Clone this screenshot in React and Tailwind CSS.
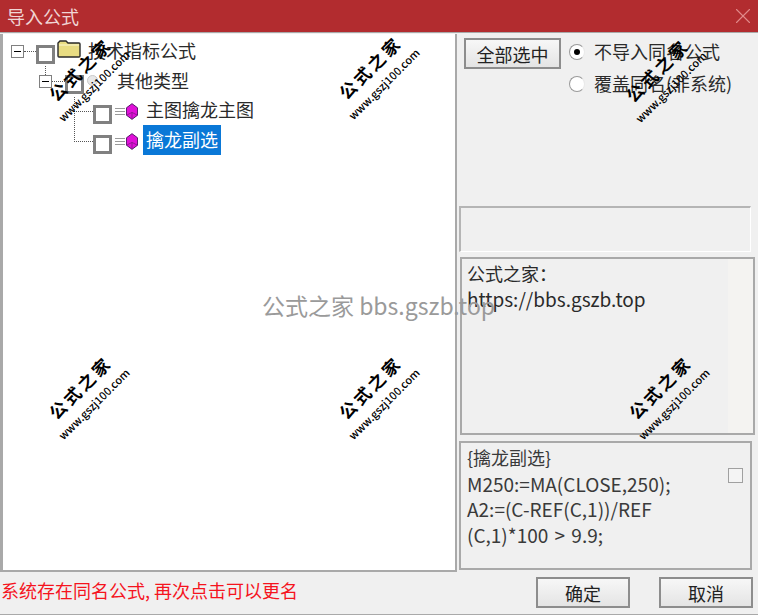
import { X } from 'lucide-react'

const FONT = "font-['Noto_Sans_CJK_SC','Noto_Sans',sans-serif]"

const WATERMARKS = [
  'left-[37px] top-[58px]',
  'left-[327px] top-[56px]',
  'left-[614px] top-[59px]',
  'left-[37px] top-[376px]',
  'left-[327px] top-[376px]',
  'left-[617px] top-[376px]',
]

export default function App() {
  return (
    <div className={`relative w-[758px] h-[615px] overflow-hidden bg-[#f0f0f0] text-[#222] ${FONT}`}>
      <header className="h-[32px] bg-[#b22c2f] flex items-center justify-between pl-[7px] pr-[2px]">
        <span className="text-[18px] leading-none text-[#f0d5d5]">导入公式</span>
        <X className="w-[26px] h-[26px] text-[#e08a8a]" strokeWidth={1} />
      </header>

      <div className="flex h-[539px] pt-[1px] border-t-[1px] border-[#a9a9a9]">
        <TreePanel />
        <div className="w-[301px] flex flex-col pl-[1px]">
          <div className="h-[172px] flex items-start pl-[6px] pt-[4px] gap-[8px]">
            <Button className="w-[97px] h-[31px]">全部选中</Button>
            <div className="flex flex-col gap-[9px] pt-[2px]">
              <Radio checked label="不导入同名公式" />
              <Radio label="覆盖同名(非系统)" />
            </div>
          </div>
          <div className="h-[46px] ml-[1px] mr-[7px] border-t-2 border-l-2 border-[#b5b5b5] border-r border-b border-r-white border-b-white" />
          <div className="h-[178px] mt-[5px] ml-[2px] mr-[3px] border-2 border-[#a9a9a9] flex">
            <div className="flex-1 pl-[5px] pt-[2px] text-[18px] leading-[25px] text-[#2a2a2a]">
              <div>公式之家：</div>
              <div className="text-[19px]">https://bbs.gszb.top</div>
            </div>
            <div className="w-[25px] bg-[#f4f3f1]" />
          </div>
          <div className="h-[129px] mt-[6px] ml-[1px] mr-[6px] border-2 border-[#a9a9a9] flex">
            <div className="flex-1 pl-[6px] pt-[2px] text-[19px] leading-[25.5px] text-[#3a3a3a]">
              <div className="text-[18px]">{'{擒龙副选}'}</div>
              <div>M250:=MA(CLOSE,250);</div>
              <div>A2:=(C-REF(C,1))/REF</div>
              <div>(C,1)*100 <span className="mx-[2px]">&gt;</span> 9.9;</div>
            </div>
            <div className="w-[22px] pt-[25px]">
              <div className="w-[15px] h-[15px] border border-[#a0a0a0] bg-[#f4f4f4]" />
            </div>
          </div>
        </div>
      </div>

      <footer className="h-[44px] border-b border-[#a9a9a9] flex items-start justify-between pr-[5px] pt-[6px]">
        <span className="pl-[1px] text-[18px] leading-[26px] text-[#f5141e]">系统存在同名公式, 再次点击可以更名</span>
        <div className="flex gap-[29px]">
          <Button className="w-[94px] h-[31px]">确定</Button>
          <Button className="w-[94px] h-[31px]">取消</Button>
        </div>
      </footer>

      <div className="absolute left-[262px] top-[290px] text-[23px] leading-[30px] text-[#9a9a9a]">公式之家 bbs.gszb.top</div>

      {WATERMARKS.map(pos => <Watermark key={pos} pos={pos} />)}
    </div>
  )
}

function TreePanel() {
  return (
    <div className="relative w-[457px] h-[538px] bg-white border-l-[3px] border-b-[2px] border-r-[2px] border-[#a9a9a9]">
      {/* dotted tree lines */}
      <div className="absolute left-[42px] top-[32px] h-[9px] border-l border-dotted border-[#555]" />
      <div className="absolute left-[71px] top-[63px] h-[45px] border-l border-dotted border-[#555]" />

      <div className="pt-[1px] text-[18px] leading-[26px] text-[#2a2a2a]">
        <div className="flex items-center h-[30px] pl-[8px]">
          <Expander />
          <Hline w="w-[12px]" />
          <Checkbox />
          <FolderIcon />
          <span className="ml-[7px]">技术指标公式</span>
        </div>
        <div className="flex items-center h-[30px] pl-[36px]">
          <Expander />
          <Hline w="w-[13px]" />
          <Checkbox />
          <span className="ml-[3px] w-[11px] h-[11px] rounded-full border border-[#c9c9c9] bg-[#e8e8e8]" />
          <span className="ml-[19px]">其他类型</span>
        </div>
        <LeafRow label="主图擒龙主图" />
        <LeafRow label="擒龙副选" selected />
      </div>
    </div>
  )
}

function LeafRow({ label, selected }) {
  return (
    <div className="flex items-center h-[30px] pl-[71px]">
      <Hline w="w-[19px]" />
      <Checkbox />
      <span className="ml-[3px] mt-[2px] flex flex-col gap-[2px] w-[10px]">
        <span className="h-px bg-[#9a9a9a]" />
        <span className="h-px bg-[#9a9a9a]" />
        <span className="h-px bg-[#9a9a9a]" />
      </span>
      <GemIcon />
      <span className={`ml-[5px] px-[3px] h-[30px] leading-[28px] ${selected ? 'bg-[#0a78d7] text-white' : ''}`}>{label}</span>
    </div>
  )
}

function Hline({ w }) {
  return <span className={`${w} mt-[3px] border-t border-dotted border-[#555]`} />
}

function Expander() {
  return (
    <span className="w-[13px] h-[13px] mt-[2px] border border-[#808080] bg-white flex items-center justify-center shrink-0">
      <span className="w-[7px] h-px bg-black" />
    </span>
  )
}

function Checkbox() {
  return <span className="w-[19px] h-[19px] mt-[9px] border-[3px] border-[#808080] bg-white shrink-0" />
}

function FolderIcon() {
  return (
    <svg width="24" height="20" viewBox="0 0 24 20" className="ml-[2px] -mt-[2px] shrink-0">
      <path d="M1 17V4l2-2h6l2 2h11a1 1 0 0 1 1 1v12a1 1 0 0 1-1 1H2a1 1 0 0 1-1-1z" fill="#e8dc82" stroke="#2a2a2a" strokeWidth="1.4" />
      <path d="M2 6h20" stroke="#f6efb8" strokeWidth="1.5" />
    </svg>
  )
}

function GemIcon() {
  return (
    <svg width="12" height="17" viewBox="0 0 13 18" className="ml-[1px] mt-[2px] shrink-0">
      <path d="M6.5.5L12.5 5V13L6.5 17.5L.5 13V5z" fill="#e010d8" stroke="#4a1060" strokeWidth="1" />
      <path d="M.5 13L6.5 10L12.5 13M6.5 10V17.5" fill="none" stroke="#7a1a80" strokeWidth=".8" />
    </svg>
  )
}

function Button({ className, children }) {
  return (
    <button className={`${className} border-2 border-[#8d8d8d] bg-gradient-to-b from-[#f7f7f7] to-[#e4e4e4] text-[18px] leading-none text-[#222]`}>
      {children}
    </button>
  )
}

function Radio({ checked, label }) {
  return (
    <div className="flex items-center gap-[9px] h-[23px] text-[18px] text-[#2a2a2a]">
      <span className="w-[16px] h-[16px] rounded-full bg-white border border-[#9a9a9a] border-r-[#e8e8e8] flex items-center justify-center">
        {checked && <span className="w-[6px] h-[6px] rounded-full bg-black" />}
      </span>
      <span>{label}</span>
    </div>
  )
}

function Watermark({ pos }) {
  return (
    <div className={`absolute ${pos} w-[106px] -rotate-45 text-black flex flex-col items-center pointer-events-none`}>
      <span className="mr-[6px] -translate-y-[5px] text-[17px] leading-[21px] font-bold tracking-[3px] whitespace-nowrap">公式之家</span>
      <span className="mr-[10px] text-[11px] leading-[13px] font-medium whitespace-nowrap">www.gszj100.com</span>
    </div>
  )
}
